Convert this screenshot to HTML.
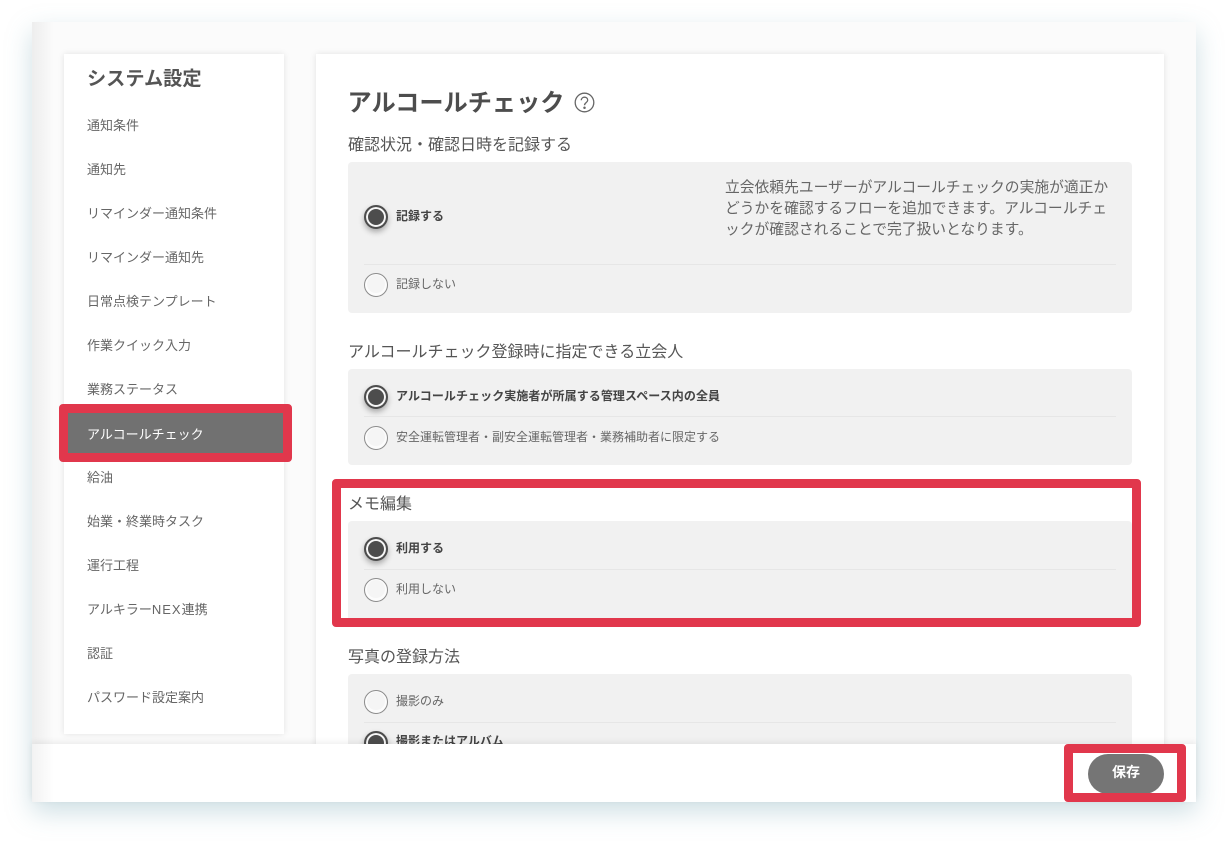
<!DOCTYPE html>
<html lang="ja"><head><meta charset="utf-8"><title>システム設定</title>
<style>
*{box-sizing:border-box;margin:0;padding:0}
html,body{width:1228px;height:844px;overflow:hidden;background:#fff}
body{position:relative;font-family:"Liberation Sans","Noto Sans CJK JP",sans-serif;color:#555}
.a{position:absolute;white-space:nowrap}
#win{position:absolute;left:32px;top:22px;width:1164px;height:780px;background:#fbfbfb;box-shadow:0 10px 24px rgba(110,160,175,.34);overflow:hidden}
#win:after{content:"";position:absolute;left:0;top:0;bottom:0;width:22px;background:linear-gradient(90deg,rgba(0,0,0,.055),rgba(0,0,0,0));}
.card{position:absolute;background:#fff;box-shadow:0 0 6px rgba(0,0,0,.1)}
.nav{position:absolute;left:87px;font-size:13px;line-height:20px;color:#666;white-space:nowrap}
.h{position:absolute;left:348px;font-size:16px;line-height:24px;color:#555;white-space:nowrap}
.box{position:absolute;left:348px;width:784px;background:#f1f1f1;border-radius:4px}
.sep{position:absolute;left:364px;width:752px;height:1px;background:#e6e6e6}
.r{position:absolute;left:364px;width:24px;height:24px;border-radius:50%}
.r.on{background:#4d4d4d;border:2px solid #4d4d4d;box-shadow:inset 0 0 0 2px #f7f7f7,0 3px 6px rgba(0,0,0,.3)}
.r.off{background:#f5f5f5;border:1px solid #8c8c8c;box-shadow:inset 0 -1px 0 2px #fcfcfc}
.l{position:absolute;left:396px;font-size:12px;line-height:18px;color:#666;white-space:nowrap}
.l.b{font-weight:700;color:#444}
.red{position:absolute;border:9px solid #e1374c;border-radius:4px}
</style></head><body>
<div id="win"></div>
<div class="card" style="left:64px;top:54px;width:220px;height:680px"></div>
<div class="card" style="left:316px;top:54px;width:848px;height:700px"></div>

<div class="a" style="left:87px;top:66px;font-size:19.2px;line-height:27px;font-weight:700;color:#555">システム設定</div>
<div class="nav" style="top:116px">通知条件</div>
<div class="nav" style="top:160px">通知先</div>
<div class="nav" style="top:204px">リマインダー通知条件</div>
<div class="nav" style="top:248px">リマインダー通知先</div>
<div class="nav" style="top:292px">日常点検テンプレート</div>
<div class="nav" style="top:336px">作業クイック入力</div>
<div class="nav" style="top:380px">業務ステータス</div>
<div class="a" style="left:64px;top:411px;width:220px;height:44px;background:#717171"></div>
<div class="nav" style="top:425px;color:#fff">アルコールチェック</div>
<div class="nav" style="top:468px">給油</div>
<div class="nav" style="top:512px">始業・終業時タスク</div>
<div class="nav" style="top:556px">運行工程</div>
<div class="nav" style="top:600px">アルキラー<span style="letter-spacing:1px">NEX</span>連携</div>
<div class="nav" style="top:644px">認証</div>
<div class="nav" style="top:688px">パスワード設定案内</div>

<div class="a" style="left:347.5px;top:86px;font-size:24.2px;line-height:35px;font-weight:700;color:#4d4d4d">アルコールチェック</div>
<svg class="a" style="left:574px;top:92px" width="21" height="21" viewBox="0 0 21 21" fill="none" stroke="#666" stroke-width="1.3"><circle cx="10.5" cy="10.5" r="9.3"/><path d="M7.3 8.3c0-1.9 1.4-3.1 3.2-3.1s3.2 1.2 3.2 2.9c0 2.5-3.2 2.6-3.2 5.2"/><circle cx="10.5" cy="15.8" r=".6" fill="#666"/></svg>

<div class="h" style="top:134px">確認状況・確認日時を記録する</div>
<div class="box" style="top:162px;height:151px"></div>
<div class="r on" style="top:205px"></div>
<div class="l b" style="top:207px">記録する</div>
<div class="a" style="left:725px;top:178px;width:392px;white-space:normal;font-size:14.77px;line-height:21px;color:#666">立会依頼先ユーザーがアルコールチェックの実施が適正かどうかを確認するフローを追加できます。アルコールチェックが確認されることで完了扱いとなります。</div>
<div class="sep" style="top:264px"></div>
<div class="r off" style="top:273px"></div>
<div class="l" style="top:275px">記録しない</div>

<div class="h" style="top:341px">アルコールチェック登録時に指定できる立会人</div>
<div class="box" style="top:369px;height:96px"></div>
<div class="r on" style="top:385px"></div>
<div class="l b" style="top:387px;letter-spacing:.07px">アルコールチェック実施者が所属する管理スペース内の全員</div>
<div class="sep" style="top:416px"></div>
<div class="r off" style="top:426px"></div>
<div class="l" style="top:428px">安全運転管理者・副安全運転管理者・業務補助者に限定する</div>

<div class="h" style="top:493px">メモ編集</div>
<div class="box" style="top:521px;height:100px"></div>
<div class="r on" style="top:537px"></div>
<div class="l b" style="top:539px">利用する</div>
<div class="sep" style="top:569px"></div>
<div class="r off" style="top:578px"></div>
<div class="l" style="top:580px">利用しない</div>

<div class="h" style="top:646px">写真の登録方法</div>
<div class="box" style="top:674px;height:96px"></div>
<div class="r off" style="top:690px"></div>
<div class="l" style="top:692px">撮影のみ</div>
<div class="sep" style="top:722px"></div>
<div class="r on" style="top:731px"></div>
<div class="l b" style="top:732px">撮影またはアルバム</div>

<div class="a" style="left:32px;top:744px;width:1164px;height:58px;background:#fff;box-shadow:0 -2px 6px rgba(0,0,0,.07)"></div>
<div class="a" style="left:32px;top:744px;width:22px;height:58px;background:linear-gradient(90deg,rgba(0,0,0,.05),rgba(0,0,0,0))"></div>
<div class="a" style="left:1088px;top:754px;width:76px;height:40px;border-radius:20px;background:#757575;color:#fff;font-size:14px;font-weight:700;line-height:37px;text-align:center">保存</div>

<div class="red" style="left:59px;top:404px;width:233px;height:58px"></div>
<div class="red" style="left:332px;top:479px;width:809px;height:148px"></div>
<div class="red" style="left:1064px;top:744px;width:122px;height:58px"></div>
</body></html>
